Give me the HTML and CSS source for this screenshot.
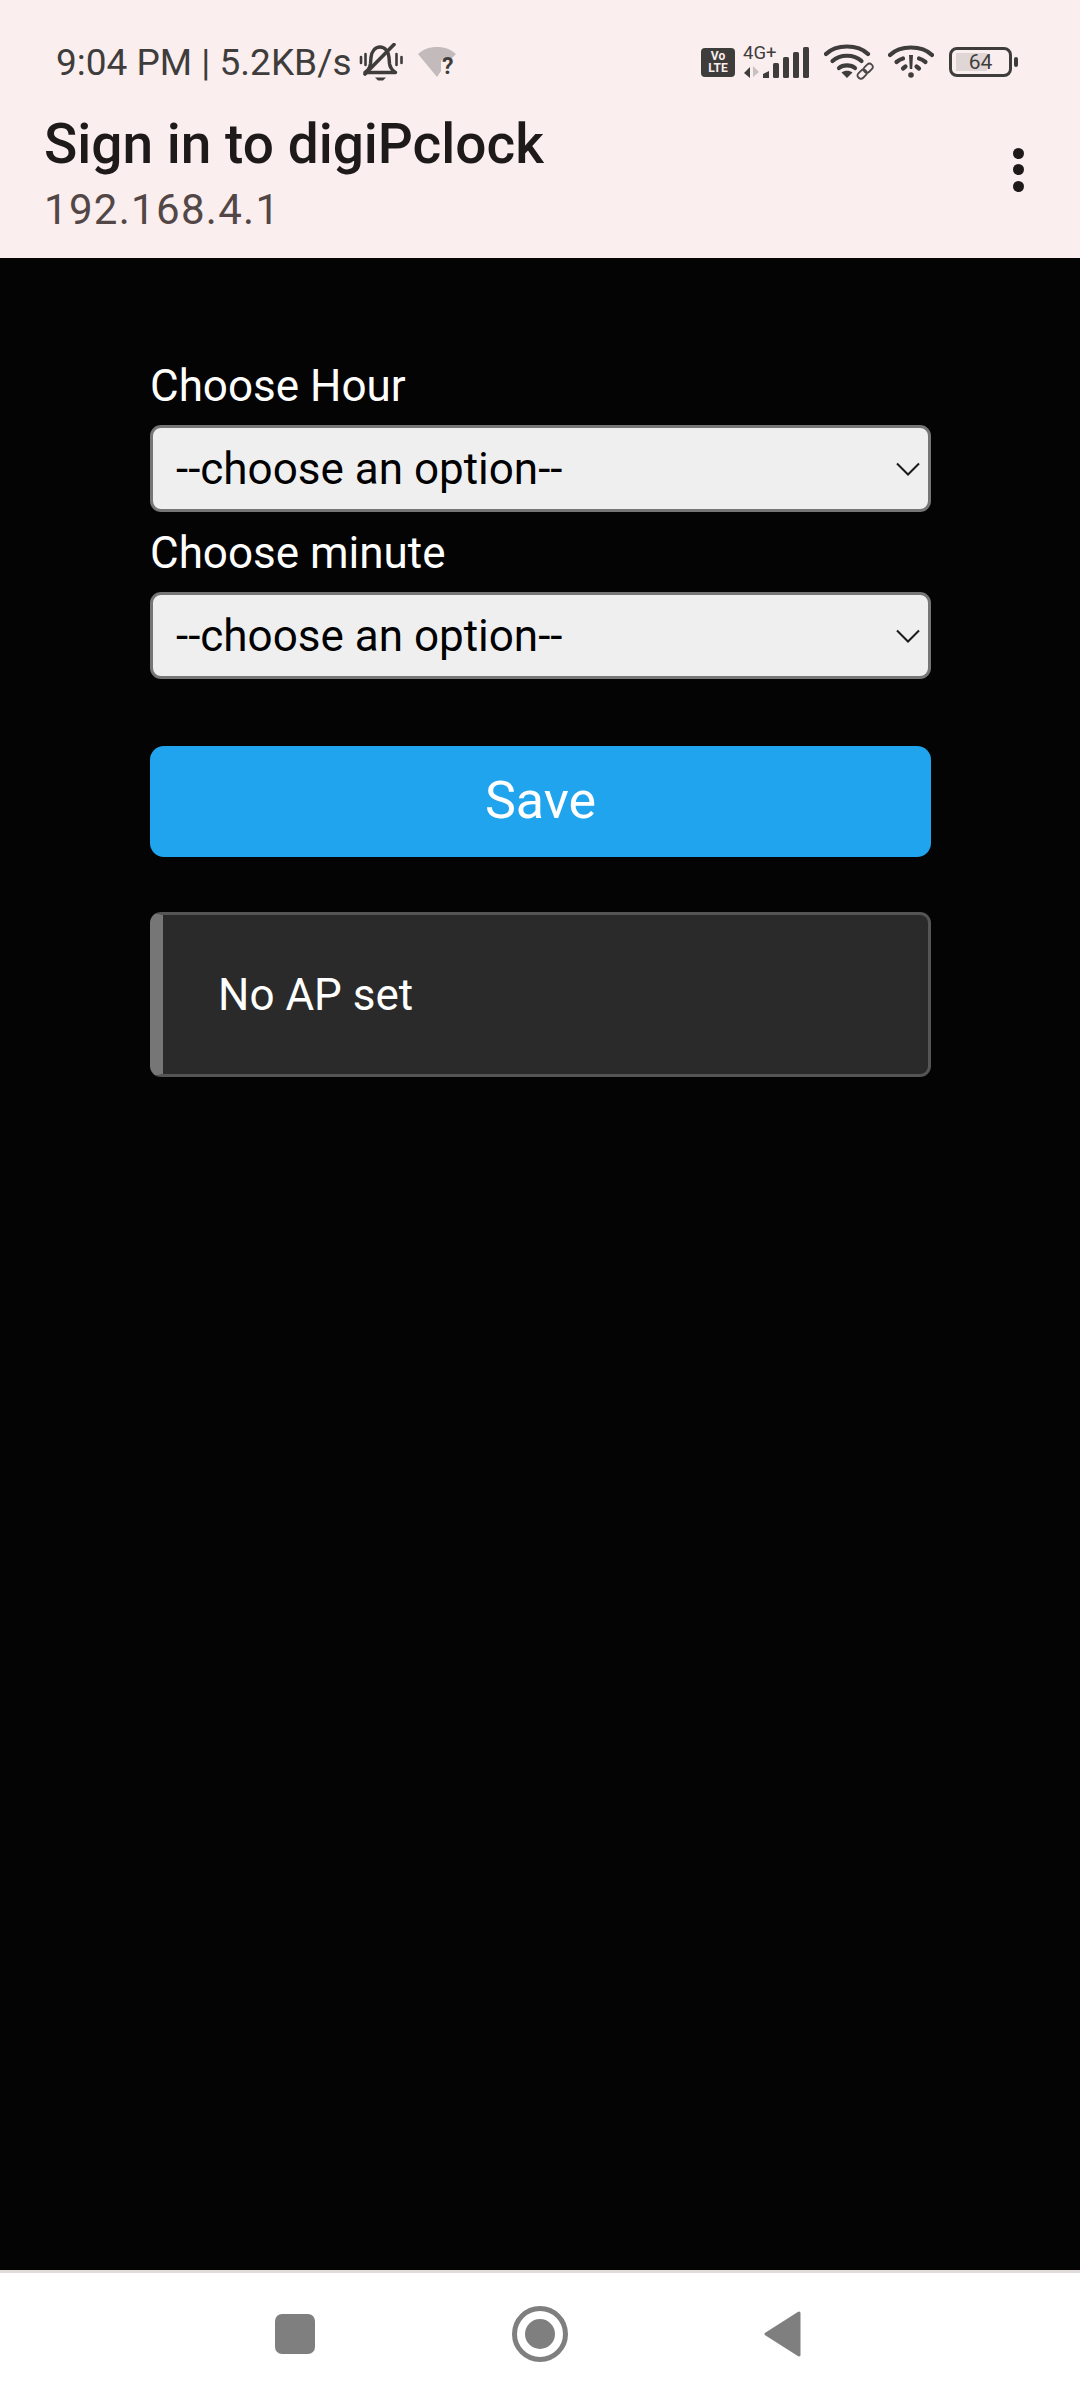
FILE: index.html
```html
<!DOCTYPE html>
<html lang="en">

<head>
    <meta charset="UTF-8">
    <meta name="viewport" content="width=device-width, initial-scale=1.0">
    <title>Sign in to digiPclock</title>
    <link rel="stylesheet" href="styles.css">
</head>

<body>
    <div class="screen">
        <header class="topbar">
            <div class="status">
                <div class="status-left">
                    <span class="status-time">9:04 PM | 5.2KB/s</span>
                    <svg class="icon-bell" width="46" height="38" viewBox="0 0 46 38">
                        <path d="M7 29.500c3-2 5-5 5.500-9l.5-6c.5-6 4-10.500 9-10.500s8.500 4.500 9 10.500l.5 6c.5 4 3 7 6 9z" fill="none" stroke="#3f3d3c" stroke-width="3.400" stroke-linejoin="round"/>
                        <path d="M17 34.500h11l-3 3h-5z" fill="#3f3d3c"/>
                        <path d="M7 31 36 1.500" stroke="#3f3d3c" stroke-width="3.600" stroke-linecap="round"/>
                        <path d="M3 14v6M7.500 11v11M38.500 11v11M43.500 14v6" stroke="#3f3d3c" stroke-width="2.600" stroke-linecap="round"/>
                    </svg>
                    <div class="wifi-off">
                        <svg width="38" height="30" viewBox="0 0 38 30">
                            <path d="M0 7C5 2.500 11 0 19 0s14 2.500 19 7l-5 5h-7q-3 0-3 3v9l-4 6z" fill="#c3bbbb"/>
                        </svg>
                        <span class="wifi-question">?</span>
                    </div>
                </div>
                <div class="status-right">
                    <div class="volte"><span>Vo</span><span>LTE</span></div>
                    <div class="signal">
                        <span class="signal-label">4G+</span>
                        <svg width="68" height="32" viewBox="0 0 68 32">
                            <path d="M7 20v11L1 26z" fill="#3f3d3c"/>
                            <path d="M10 19v11l6-5z" fill="#c9c1c0"/>
                            <path d="M20 31v-4l6-3v7z" fill="#3f3d3c"/>
                            <rect x="30" y="16" width="6" height="15" rx="1.500" fill="#3f3d3c"/>
                            <rect x="40" y="10" width="6" height="21" rx="1.500" fill="#3f3d3c"/>
                            <rect x="50" y="5" width="6" height="26" rx="1.500" fill="#3f3d3c"/>
                            <rect x="60" y="0" width="6" height="31" rx="1.500" fill="#3f3d3c"/>
                        </svg>
                    </div>
                    <svg class="icon-wifi" width="50" height="36" viewBox="0 0 50 36">
                        <g fill="none" stroke="#3f3d3c" stroke-width="4.200" stroke-linecap="round">
                            <path d="M2 10C12 0 34 0 44 10"/>
                            <path d="M8.500 17C16 10 30 10 37.500 17"/>
                            <path d="M15 24C19 20.500 27 20.500 31 24"/>
                        </g>
                        <path d="M17.500 28.500C20.500 26 25.500 26 28.500 28.500L23 34z" fill="#3f3d3c"/>
                        <g fill="none" stroke="#4a4847" stroke-width="1.800">
                            <rect x="33" y="27" width="10" height="6.500" rx="3.200" transform="rotate(-45 38 30)"/>
                            <rect x="39" y="21" width="10" height="6.500" rx="3.200" transform="rotate(-45 44 24)"/>
                        </g>
                    </svg>
                    <svg class="icon-wifi-alert" width="46" height="34" viewBox="0 0 46 34">
                        <g fill="none" stroke="#3f3d3c" stroke-width="4.200" stroke-linecap="round">
                            <path d="M2 10C12 0 34 0 44 10"/>
                            <path d="M8.500 17C11 15 13 14 15 13.500"/>
                            <path d="M31 13.500C33 14 35 15 37.500 17"/>
                            <path d="M15 23.500 17.500 21.500"/>
                            <path d="M28.500 21.500 31 23.500"/>
                        </g>
                        <path d="M21 10h4l-.8 14h-2.400z" fill="#3f3d3c"/>
                        <circle cx="23" cy="30" r="2.800" fill="#3f3d3c"/>
                    </svg>
                    <div class="battery">
                        <div class="battery-body">
                            <div class="battery-fill"></div>
                            <span class="battery-level">64</span>
                        </div>
                        <div class="battery-tip"></div>
                    </div>
                </div>
            </div>
            <div class="title-row">
                <div class="title-text">
                    <h1>Sign in to digiPclock</h1>
                    <p>192.168.4.1</p>
                </div>
                <div class="menu-dots"><i></i><i></i><i></i></div>
            </div>
        </header>

        <main class="portal">
            <label for="hour">Choose Hour</label>
            <div class="select-wrap">
                <select id="hour">
                    <option>--choose an option--</option>
                </select>
                <svg class="chevron" width="24" height="14" viewBox="0 0 24 14">
                    <path d="M1 1.500 12 12.500 23 1.500" fill="none" stroke="#1a1a1a" stroke-width="2"/>
                </svg>
            </div>
            <label for="minute">Choose minute</label>
            <div class="select-wrap">
                <select id="minute">
                    <option>--choose an option--</option>
                </select>
                <svg class="chevron" width="24" height="14" viewBox="0 0 24 14">
                    <path d="M1 1.500 12 12.500 23 1.500" fill="none" stroke="#1a1a1a" stroke-width="2"/>
                </svg>
            </div>
            <button type="button" class="save">Save</button>
            <div class="message">No AP set</div>
        </main>

        <footer class="navbar">
            <svg width="40" height="40" viewBox="0 0 40 40">
                <rect width="40" height="40" rx="7" fill="#7f7f7f"/>
            </svg>
            <svg width="56" height="56" viewBox="0 0 56 56">
                <circle cx="28" cy="28" r="25.500" fill="none" stroke="#7f7f7f" stroke-width="5"/>
                <circle cx="28" cy="28" r="15" fill="#7f7f7f"/>
            </svg>
            <svg width="38" height="46" viewBox="0 0 38 46">
                <path d="M35 2 2 23l33 21z" fill="#7f7f7f" stroke="#7f7f7f" stroke-width="3" stroke-linejoin="round"/>
            </svg>
        </footer>
    </div>
</body>

</html>
```

FILE: styles.css
```css
* {
    box-sizing: border-box;
}

body {
    margin: 0;
    font-family: Roboto, "Noto Sans", sans-serif;
    background-color: #040404;
}

.screen {
    display: flex;
    flex-direction: column;
    width: 1080px;
    height: 2400px;
    overflow: hidden;
}

/* top bar */
.topbar {
    height: 258px;
    padding: 43px 56px 0 44px;
    background-color: #faeeee;
}

.status {
    display: flex;
    justify-content: space-between;
    align-items: center;
    height: 38px;
    padding-left: 12px;
    padding-right: 6px;
}

.status-left,
.status-right {
    display: flex;
    align-items: center;
}

.status-time {
    font-size: 37px;
    color: #3f3d3c;
    white-space: nowrap;
}

.icon-bell {
    margin-left: 6px;
}

.wifi-off {
    position: relative;
    width: 38px;
    height: 30px;
    margin-left: 14px;
}

.wifi-question {
    position: absolute;
    right: 2px;
    bottom: -1px;
    font-size: 23px;
    font-weight: 700;
    line-height: 23px;
    color: #3f3d3c;
}

.volte {
    display: flex;
    flex-direction: column;
    justify-content: center;
    align-items: center;
    width: 34px;
    height: 29px;
    background-color: #3f3d3c;
    border-radius: 4px;
    color: #faeeee;
    font-size: 12px;
    font-weight: 700;
    line-height: 12px;
}

.signal {
    display: flex;
    flex-direction: column;
    width: 68px;
    height: 33px;
    margin-left: 8px;
}

.signal-label {
    height: 0;
    font-size: 18.500px;
    line-height: 14px;
    color: #3f3d3c;
}

.signal svg {
    margin-top: 1px;
}

.icon-wifi {
    margin-left: 13px;
}

.icon-wifi-alert {
    margin-left: 14px;
}

.battery {
    display: flex;
    align-items: center;
    margin-left: 15px;
}

.battery-body {
    position: relative;
    display: flex;
    justify-content: center;
    align-items: center;
    width: 63px;
    height: 30px;
    border: 3px solid #3f3d3c;
    border-radius: 8px;
}

.battery-fill {
    position: absolute;
    left: 4px;
    top: 3px;
    bottom: 3px;
    width: 31px;
    background-color: #e0d6d6;
}

.battery-level {
    position: relative;
    font-size: 21px;
    color: #3f3d3c;
}

.battery-tip {
    width: 4px;
    height: 10px;
    margin-left: 2px;
    background-color: #3f3d3c;
    border-radius: 2px;
}

.title-row {
    display: flex;
    justify-content: space-between;
    align-items: center;
    margin-top: 32px;
}

h1 {
    margin: 0;
    font-size: 55px;
    font-weight: 500;
    line-height: 62px;
    color: #1f1a1a;
}

.title-text p {
    margin: 10px 0 0;
    font-size: 42px;
    line-height: 50px;
    letter-spacing: 1.300px;
    color: #534646;
}

.menu-dots {
    display: flex;
    flex-direction: column;
    gap: 5.500px;
    margin-bottom: 9px;
}

.menu-dots i {
    display: block;
    width: 11px;
    height: 11px;
    border-radius: 50%;
    background-color: #1f1a1a;
}

/* captive portal form */
.portal {
    flex: 1;
    padding: 99px 149px 0 150px;
}

label {
    display: block;
    font-size: 44px;
    line-height: 58px;
    color: #fff;
}

.select-wrap {
    position: relative;
    margin-top: 10px;
    margin-bottom: 12px;
}

select {
    display: block;
    width: 100%;
    height: 87px;
    padding: 0 23px;
    font-family: inherit;
    font-size: 44px;
    color: #000;
    background-color: #efefef;
    border: 3px solid #767676;
    border-radius: 11px;
    appearance: none;
}

.chevron {
    position: absolute;
    right: 11px;
    top: 37px;
}

.save {
    display: block;
    width: 100%;
    height: 111px;
    margin-top: 67px;
    padding-bottom: 4px;
    font-family: inherit;
    font-size: 52px;
    color: #fff;
    background-color: #20a4ee;
    border: none;
    border-radius: 14px;
}

.message {
    display: flex;
    align-items: center;
    height: 165px;
    margin-top: 55px;
    padding-left: 55px;
    font-size: 44px;
    color: #fff;
    background-color: #2a2a2a;
    border: 3px solid #555;
    border-left: 13px solid #767676;
    border-radius: 11px;
}

/* android nav buttons */
.navbar {
    display: flex;
    justify-content: space-between;
    align-items: center;
    height: 130px;
    padding: 0 278px 6px 275px;
    background-color: #fff;
    border-top: 3px solid #e0dad8;
}
```
